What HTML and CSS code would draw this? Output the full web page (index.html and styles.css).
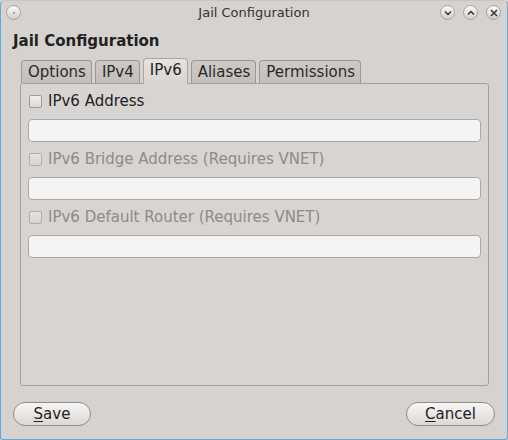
FILE: index.html
```html
<!DOCTYPE html>
<html>
<head>
<meta charset="utf-8">
<link rel="stylesheet" href="styles.css">
</head>
<body>
<div class="window">
  <div class="titlebar">
    <span class="tb-btn menu-btn"><span class="dot"></span></span>
    <span class="title">Jail Configuration</span>
    <span class="tb-right">
      <span class="tb-btn"><svg width="8" height="6" viewBox="0 0 8 6"><path d="M1 1.5 L4 4.5 L7 1.5" fill="none" stroke="#333" stroke-width="1.5"/></svg></span>
      <span class="tb-btn"><svg width="8" height="6" viewBox="0 0 8 6"><path d="M1 4.5 L4 1.5 L7 4.5" fill="none" stroke="#333" stroke-width="1.5"/></svg></span>
      <span class="tb-btn"><svg width="8" height="8" viewBox="0 0 8 8"><path d="M1 1 L7 7 M7 1 L1 7" fill="none" stroke="#333" stroke-width="1.5"/></svg></span>
    </span>
  </div>
  <div class="content">
    <div class="heading">Jail Configuration</div>
    <div class="tabs">
      <div class="tab">Options</div>
      <div class="tab">IPv4</div>
      <div class="tab active">IPv6</div>
      <div class="tab">Aliases</div>
      <div class="tab">Permissions</div>
    </div>
    <div class="pane">
      <div class="row"><span class="check"></span><span class="label">IPv6 Address</span></div>
      <div class="input"></div>
      <div class="row disabled"><span class="check"></span><span class="label">IPv6 Bridge Address (Requires VNET)</span></div>
      <div class="input"></div>
      <div class="row disabled"><span class="check"></span><span class="label">IPv6 Default Router (Requires VNET)</span></div>
      <div class="input"></div>
    </div>
    <div class="buttons">
      <div class="btn save"><u>S</u>ave</div>
      <div class="btn cancel"><u>C</u>ancel</div>
    </div>
  </div>
</div>
</body>
</html>
```
FILE: styles.css
```css
* { box-sizing: border-box; }
html, body { margin: 0; padding: 0; }
body {
  width: 508px;
  height: 440px;
  font-family: "DejaVu Sans", sans-serif;
  color: #222;
  background: #d6d2cf;
}
.window {
  width: 508px;
  height: 440px;
  border: 1px solid #5fa9dc;
  border-top-color: #c9c5c2;
  border-radius: 5px 5px 3px 3px;
  background: #d6d2cf;
  display: flex;
  flex-direction: column;
}
.titlebar {
  height: 23px;
  display: flex;
  align-items: center;
  position: relative;
  padding: 0 6px;
}
.title {
  position: absolute;
  left: 0;
  right: 0;
  text-align: center;
  font-size: 13px;
  color: #333;
  top: 4px;
  pointer-events: none;
}
.tb-btn {
  width: 15px;
  height: 15px;
  border-radius: 50%;
  border: 1px solid #a6a29f;
  background: linear-gradient(#fbfafa, #d2cecb);
  display: inline-flex;
  align-items: center;
  justify-content: center;
}
.menu-btn { margin-left: -1px; }
.dot { width: 2px; height: 2px; background: #999; border-radius: 50%; }
.tb-right {
  margin-left: auto;
  display: flex;
  gap: 8px;
}
.content {
  flex: 1;
  display: flex;
  flex-direction: column;
  padding: 0 12px;
}
.heading {
  font-weight: bold;
  font-size: 15px;
  line-height: 18px;
  margin-top: 8px;
  color: #222;
}
.tabs {
  display: flex;
  gap: 3px;
  margin-top: 8px;
  height: 25px;
  align-items: flex-end;
  margin-left: 8px;
}
.tab {
  height: 23px;
  padding: 0 5px 0 6px;
  font-size: 15px;
  line-height: 22px;
  border: 1px solid #9a9794;
  border-bottom: none;
  border-radius: 4px 4px 0 0;
  background: linear-gradient(#cdc9c6, #c3bfbc);
  color: #2a2a2a;
}
.tab.active {
  height: 26px;
  line-height: 23px;
  margin-bottom: -1px;
  background: linear-gradient(#e6e3e1, #d8d4d1);
  border-color: #a9a5a2;
  position: relative;
  z-index: 1;
  color: #222;
}
.pane {
  height: 303px;
  border: 1px solid #a3a09d;
  border-radius: 3px;
  background: #d8d4d1;
  padding: 8px 7px 0 7px;
  display: flex;
  flex-direction: column;
  margin: 0 6px 0 7px;
}
.row {
  height: 18px;
  display: flex;
  align-items: center;
  font-size: 15px;
}
.check {
  width: 13px;
  height: 13px;
  border: 1px solid #9d9a97;
  border-radius: 2px;
  background: linear-gradient(#f2f0ef, #dcd8d5);
  margin-left: 1px;
  margin-right: 6px;
}
.row.disabled { color: #8e8b89; }
.row.disabled .check { border-color: #b0adaa; background: linear-gradient(#e6e3e1, #d8d4d1); }
.input {
  height: 23px;
  margin: 9px 0 8px 0;
  border: 1px solid #aaa7a4;
  border-radius: 4px;
  background: #f4f4f4;
}
.buttons {
  display: flex;
  justify-content: space-between;
  margin-top: 16px;
}
.btn {
  height: 24px;
  border: 1px solid #8f8c89;
  border-radius: 12px;
  background: linear-gradient(#f7f6f5, #dcd8d5);
  font-size: 15px;
  line-height: 22px;
  text-align: center;
  color: #222;
}
.btn u { text-underline-offset: 2px; }
.save { width: 78px; }
.cancel { width: 89px; }
```
